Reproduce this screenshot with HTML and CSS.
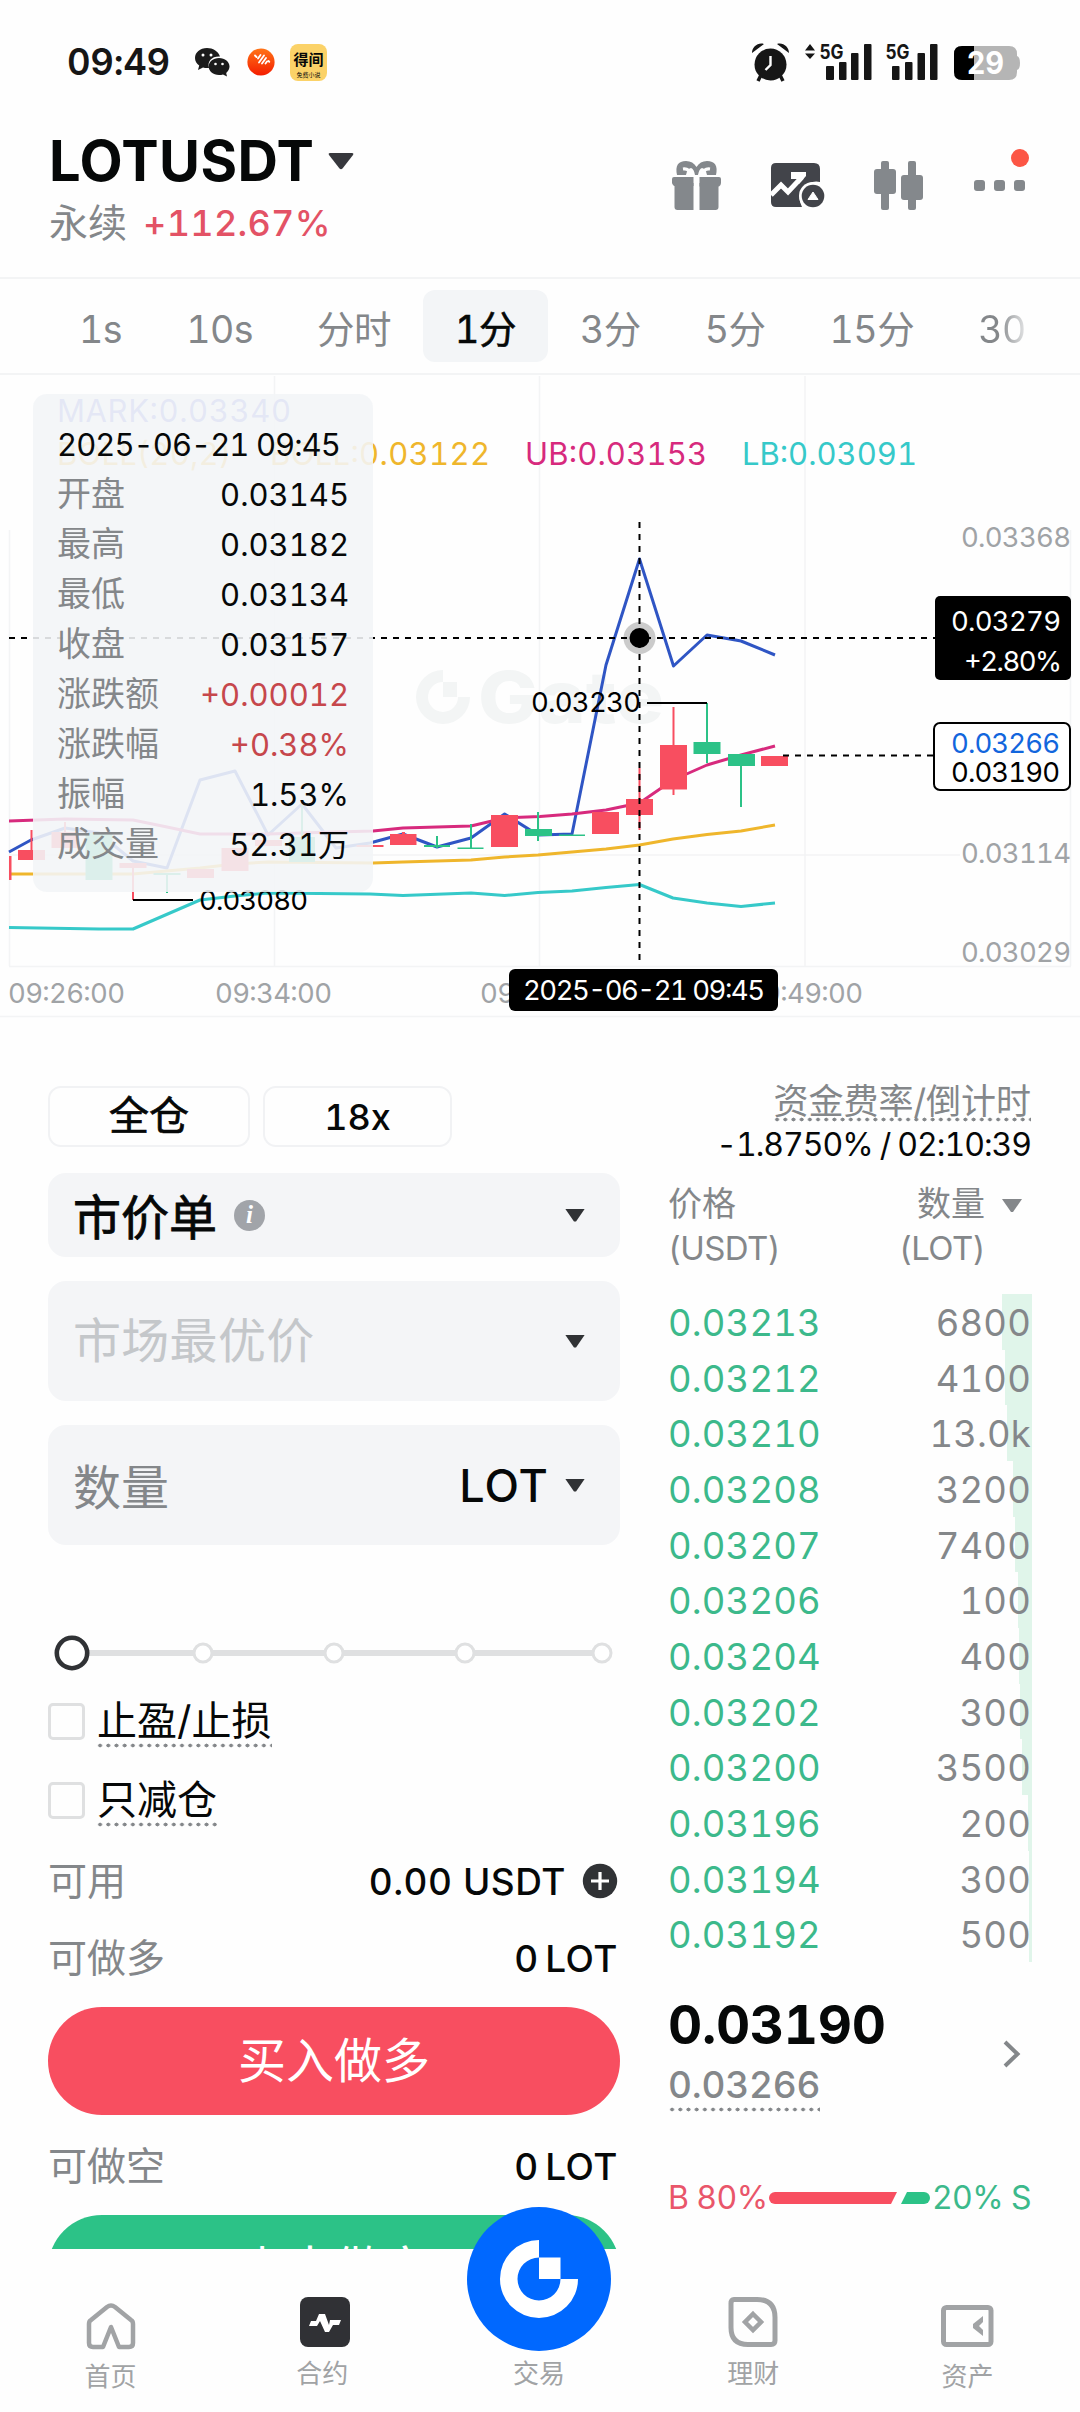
FILE: index.html
```html
<!DOCTYPE html>
<html lang="zh-CN">
<head>
<meta charset="utf-8">
<title>LOTUSDT 永续</title>
<link rel="stylesheet" href="styles.css">
</head>
<body>
<div class="page">
  <div class="status">
    <span class="clock">09:49</span>
    <svg class="wechat" width="36" height="30" viewBox="0 0 36 30"><path d="M13 1C6 1 1 5.500 1 11c0 3.200 1.600 5.800 4.200 7.600L4 23l5-2.500c2 .5 4 .7 6 .4 C13 14 18 9 26 9.500 24 4 19 1 13 1z" fill="#1b1b1b"/><path d="M25 11c-6 0-10.300 3.800-10.300 8.500S19 28 25 28c1.500 0 2.800-.2 4-.6l4 2-.8-3.400c2-1.700 3.300-4 3.300-6.500C35.500 14.800 31 11 25 11z" fill="#1b1b1b"/><g fill="#fff"><circle cx="9" cy="8" r="1.500"/><circle cx="17" cy="8" r="1.500"/><circle cx="21.500" cy="17" r="1.300"/><circle cx="28.500" cy="17" r="1.300"/></g></svg>
    <svg class="orb" width="28" height="28" viewBox="0 0 28 28"><defs><linearGradient id="og" x1="0" y1="0" x2="0" y2="1"><stop offset="0" stop-color="#ff7417"/><stop offset="1" stop-color="#f41d00"/></linearGradient></defs><circle cx="14" cy="14" r="13.600" fill="url(#og)"/><path d="M8 7.500l1.500 1.500M11 10.500l2.500-3.500M12 14.500l5-7M15 15.500l4-5.500M18.500 15.500l1.500-2M21.500 13l.8.8" stroke="#fff" stroke-width="1.800" stroke-linecap="round"/></svg>
    <div class="novel"><span class="novel-a">得间</span><span class="novel-b">免费小说</span></div>
    <svg class="sys" width="270" height="42" viewBox="750 41 270 42">
      <g fill="#161616"><circle cx="769.500" cy="64.500" r="16"/><path d="M757 81l3-6M782 81l-3-6" stroke="#161616" stroke-width="3.500"/><path d="M751 53c0-6 6-11 12-9zM788 53c0-6-6-11-12-9z"/><path d="M769.500 56v9l-5 5" stroke="#fff" stroke-width="2.400" fill="none"/>
      <path d="M804 50.500l5-6.500 5 6.500zM804 53.500l5 5.500 5-5.500z"/>
      <rect x="825" y="66" width="8" height="14" rx="1"/><rect x="838" y="62" width="7.500" height="18" rx="1"/><rect x="850" y="53" width="7.500" height="27" rx="1"/><rect x="863" y="44" width="7.500" height="36" rx="1"/>
      <rect x="891" y="66" width="7.500" height="14" rx="1"/><rect x="904" y="62" width="7.500" height="18" rx="1"/><rect x="916.500" y="53" width="7.500" height="27" rx="1"/><rect x="929" y="44" width="7.500" height="36" rx="1"/></g>
      <g class="g5"><text x="818.500" y="59" textLength="24" lengthAdjust="spacingAndGlyphs">5G</text><text x="884.500" y="59" textLength="24" lengthAdjust="spacingAndGlyphs">5G</text></g>
      <path d="M961 46h47q8 0 8 8v2q3 1 3 7t-3 7v2q0 8-8 8h-47q-8 0-8-8V54q0-8 8-8z" fill="#b5b5b5"/><path d="M973 46h-12q-8 0-8 8v18q0 8 8 8h12z" fill="#000"/>
      <text class="batt" x="966" y="74" textLength="37" lengthAdjust="spacingAndGlyphs">29</text>
    </svg>
  </div>

  <header class="head">
    <div class="pair">
      <div class="title">LOTUSDT <svg width="28" height="18" viewBox="0 0 28 18"><path d="M3 1h22q2 0 1 2L15.500 16.500q-1.500 1.500-3 0L2 3Q1 1 3 1z" fill="#37383d"/></svg></div>
      <div class="sub"><span>永续</span><b>+112.67%</b></div>
    </div>
    <svg class="tools" width="354" height="62" viewBox="672 151 354 62">
      <g fill="#84888c"><path d="M674 177h19.500v9H674q-2-2-2-3v-4q0-2 2-2zM699.500 177h19.500q2 0 2 2v4q0 2-2 3.500h-19.500z"/><path d="M674.500 183h19v27h-16q-3 0-3-3zM699.500 183h19v24q0 3-3 3h-16z"/><path d="M677 175q-3-14 9-14 7 0 10.500 6 3.500-6 10.500-6 12 0 9 14h-9q-1-6-5-7-3 1-4 7h-3q-1-6-4-7-4 1-5 7z"/></g>
      <path d="M683 169q6-1 8 6M710 169q-6-1-8 6" stroke="#fefefe" stroke-width="3" fill="none"/>
      <path d="M776 163h38q6 0 6 6v13a17 17 0 0 0-18 25H776q-5 0-5-5v-34q0-5 5-5z" fill="#42444a"/><path d="M771 195l10-10 7 7 14-15" stroke="#fff" stroke-width="5" fill="none"/><path d="M791 172h15v4l-7 8-2-5h-6z" fill="#fff"/>
      <circle cx="813" cy="196" r="14" fill="#fff"/><circle cx="813" cy="196" r="11.300" fill="#42444a"/><path d="M808 199.500l5-7.500 5 7.500z" fill="#fff" stroke="#fff" stroke-linejoin="round"/>
      <g fill="#84888c"><rect x="874" y="169" width="22" height="25" rx="3"/><rect x="881" y="161" width="8" height="49" rx="2"/><rect x="901" y="175" width="22" height="25" rx="3"/><rect x="908" y="161" width="8" height="49" rx="2"/><rect x="974" y="180" width="11" height="11" rx="3"/><rect x="994" y="180" width="11" height="11" rx="3"/><rect x="1014" y="180" width="11" height="11" rx="3"/></g>
    </svg>
    <i class="dot"></i>
  </header>

  <nav class="tabs"><span>1s</span><span>10s</span><span>分时</span><span class="on">1分</span><span>3分</span><span>5分</span><span>15分</span><span class="fade">30</span></nav>

  <section class="chart">
    <svg class="plot" width="1080" height="643" viewBox="0 375 1080 643">
      <g stroke="#f3f4f5" stroke-width="1.500" fill="none"><path d="M9.500 530V966M274.500 376V966M539.500 376V966M805 376V966M1070.500 530V966M9 855H960M9 966.500H1071M0 1016.500H1080"/></g>
      <g class="mark"><path d="M443 670a27 27 0 1 0 27 27h-12a15 15 0 1 1-15-15z"/><rect x="443" y="682" width="14" height="15"/><text x="478" y="723" textLength="186" lengthAdjust="spacingAndGlyphs">Gate</text></g>
      <g class="legend"><text x="57" y="422" textLength="234" fill="#6b78e0">MARK:0.03340</text><text x="57" y="465" textLength="174" fill="#efb62c">BOLL(20,2)</text><text x="270" y="465" textLength="220" fill="#efb62c">BOLL:0.03122</text><text x="525" y="465" textLength="182" fill="#d72a7d">UB:0.03153</text><text x="742" y="465" textLength="175" fill="#36c9c9">LB:0.03091</text></g>
      <g fill="none" stroke-width="3" stroke-linejoin="round">
        <path stroke="#2f55c4" d="M9 852L31 840 65 828 99 833 133 861 167 868 200 780 235 771 268 835 302 804 336 848 370 843 403 834 437 847 471 838 504.600 814 538 835 572 834 606 665 639.500 559 673.500 666 707 635 741 641 775 655"/>
        <path stroke="#d72a7d" d="M9 821L65 819 133 820 167 827 200 834 268 834 336 832 373 831 403 828 471 826 504.600 818 540 816.500 572 814 606 810 639.500 803 673 780 707 765 741 755 775 746"/>
        <path stroke="#efb62c" d="M9 874H133L200 868 235 864 268 862 373 863 403 862 471 860 504.600 857 538 855 572 852 606 849 639.500 845 673 839 707 834.500 741 831 775 825"/>
        <path stroke="#36c9c9" d="M9 927.500L99 929H133L200 900 235 896 268 893 370 894 403 895.500 471 893 504.600 895.500 538 892.500 572 891 606 887.500 639.500 884.500 673 898 707 903 741 906.500 775 903"/>
      </g>
      <g fill="#f84e60"><path d="M9 856h2.500v24H9zM18 850h27v10H18zM30.500 830h2v20h-2zM51.500 832h27v16h-27zM64 822h2v10h-2zM119.500 863h27v5h-27zM132 868h2v32h-2zM187 869h27v9h-27zM221.500 848h27v23h-27zM255 840h27v6h-27zM356.500 845h27v2h-27zM390 834h26.500v11H390zM402 832h3v2h-3zM491 815h27v32h-27zM592 812h27v22h-27zM626 799h27v16h-27zM638.500 768h2v62h-2zM660 745h27v44.500h-27zM672.500 707h2v88h-2zM761 756h27v10h-27z"/></g>
      <g fill="#2cc287"><path d="M85.500 833h27v47h-27zM153.500 873h27v2h-27zM166 875h2v18h-2zM289 837h26v25h-26zM301 805h2v32h-2zM424 845h26v2h-26zM436 836h2v12h-2zM457.500 847.500h26v1.500h-26zM470 824h2v24h-2zM525 829h27v7h-27zM537 812h2v29h-2zM559 834.500h26v1.500h-26zM693.500 742h27v12h-27zM706 703h2v60h-2zM728 754h27v12h-27zM740 766h2v41h-2z"/></g>
      <g class="small"><path d="M133 900h60M647 703h60" stroke="#000" stroke-width="2"/><text x="199" y="910" textLength="109">0.03080</text><text x="531" y="712" textLength="110">0.03230</text>
        <path d="M783 755.500H933M9 638H935M639.500 522V962" stroke="#000" stroke-width="2" stroke-dasharray="6 6"/></g>
      <circle cx="639.500" cy="638" r="16" fill="#000" opacity=".2"/><circle cx="639.500" cy="638" r="10"/>
      <g class="small axis"><text x="961" y="547" textLength="110">0.03368</text><text x="961" y="863" textLength="110">0.03114</text><text x="961" y="962" textLength="110">0.03029</text><text x="8" y="1003" textLength="117">09:26:00</text><text x="215" y="1003" textLength="117">09:34:00</text><text x="480" y="1003" textLength="117">09:42:00</text><text x="746" y="1003" textLength="117">09:49:00</text></g>
      <rect x="935" y="596" width="136" height="84" rx="5"/><rect x="509" y="969" width="269" height="42" rx="6"/>
      <rect x="934" y="723" width="136" height="67" rx="6" fill="#fff" stroke="#000" stroke-width="2"/>
      <g class="small"><text x="951" y="631" textLength="110" fill="#fff">0.03279</text><text x="964" y="671" textLength="98" fill="#fff">+2.80%</text><text x="523" y="1000" textLength="242" fill="#fff">2025-06-21 09:45</text><text x="951" y="753" textLength="109" fill="#1266dd">0.03266</text><text x="951" y="782" textLength="109">0.03190</text></g>
    </svg>
    <div class="tip">
      <div class="date">2025-06-21 09:45</div>
      <dl><dt>开盘</dt><dd>0.03145</dd><dt>最高</dt><dd>0.03182</dd><dt>最低</dt><dd>0.03134</dd><dt>收盘</dt><dd>0.03157</dd><dt>涨跌额</dt><dd class="up">+0.00012</dd><dt>涨跌幅</dt><dd class="up">+0.38%</dd><dt>振幅</dt><dd>1.53%</dd><dt>成交量</dt><dd>52.31万</dd></dl>
    </div>
  </section>

  <main class="trade">
    <section class="form">
      <div class="modes"><span class="mode wide">全仓</span><span class="mode">18x</span></div>
      <div class="field short"><span>市价单</span><i class="info">i</i><i class="caret"></i></div>
      <div class="field"><span class="hint">市场最优价</span><i class="caret"></i></div>
      <div class="field"><span class="label">数量</span><b class="unit">LOT</b><i class="caret"></i></div>
      <svg class="slider" width="572" height="40" viewBox="48 1633 572 40"><path d="M72 1653H602" stroke="#dfe0e1" stroke-width="6"/><g fill="#fff" stroke="#dfe0e1" stroke-width="3"><circle cx="203" cy="1653" r="9"/><circle cx="334" cy="1653" r="9"/><circle cx="465" cy="1653" r="9"/><circle cx="602" cy="1653" r="9"/></g><circle cx="72" cy="1653" r="15.200" fill="#fff" stroke="#303235" stroke-width="4.600"/></svg>
      <div class="check"><i></i><span>止盈/止损</span></div>
      <div class="check"><i></i><span>只减仓</span></div>
      <div class="row avail"><span>可用</span><b>0.00 USDT</b><svg width="36" height="36" viewBox="0 0 36 36"><circle cx="18" cy="18" r="17.200" fill="#303235"/><path d="M9 18h18M18 9v18" stroke="#fff" stroke-width="3.200"/></svg></div>
      <div class="row"><span>可做多</span><b class="lot">0 LOT</b></div>
      <div class="btn buy">买入做多</div>
      <div class="row second"><span>可做空</span><b class="lot">0 LOT</b></div>
      <div class="btn sell">卖出做空</div>
    </section>
    <section class="book">
      <div class="rate"><span>资金费率/倒计时</span></div>
      <div class="count">-1.8750%<i>/</i>02:10:39</div>
      <div class="cols"><div>价格<br><em>(USDT)</em></div><div class="r">数量<br><em>(LOT)</em></div><i class="caret gray"></i></div>
      <ul>
        <li><i style="width:30px"></i><b>0.03213</b><span>6800</span></li>
        <li><i style="width:27px"></i><b>0.03212</b><span>4100</span></li>
        <li><i style="width:25px"></i><b>0.03210</b><span>13.0k</span></li>
        <li><i style="width:19px"></i><b>0.03208</b><span>3200</span></li>
        <li><i style="width:17px"></i><b>0.03207</b><span>7400</span></li>
        <li><i style="width:14px"></i><b>0.03206</b><span>100</span></li>
        <li><i style="width:13px"></i><b>0.03204</b><span>400</span></li>
        <li><i style="width:12px"></i><b>0.03202</b><span>300</span></li>
        <li><i style="width:10px"></i><b>0.03200</b><span>3500</span></li>
        <li><i style="width:4px"></i><b>0.03196</b><span>200</span></li>
        <li><i style="width:3px"></i><b>0.03194</b><span>300</span></li>
        <li><i style="width:3px"></i><b>0.03192</b><span>500</span></li>
      </ul>
      <div class="last"><div><div class="price">0.03190</div><div class="index">0.03266</div></div><svg width="20" height="30" viewBox="0 0 20 30"><path d="M3 3l12.500 12L3 27" stroke="#84878a" stroke-width="4" fill="none"/></svg></div>
      <div class="ratio"><span class="b">B 80%</span><svg width="162" height="12" viewBox="0 0 162 12"><path d="M6 0h122l-6 12H6A6 6 0 0 1 6 0z" fill="#f84e60"/><path d="M138 0h17a6 6 0 0 1 0 12h-23z" fill="#2cc287"/></svg><span class="s">20% S</span></div>
    </section>
  </main>

  <footer class="bar">
    <div class="item low"><svg width="50" height="48" viewBox="87 2301 50 48"><path d="M92 2319l16-13q4-3 8 0l16 13q2 1 2 4v19q0 4-4 4h-10l-8-20-8 20H94q-4 0-4-4v-19q0-3 2-4z" fill="none" stroke="#a1a3a5" stroke-width="4.500" stroke-linejoin="round"/></svg><span>首页</span></div>
    <div class="item futures"><svg width="50" height="50" viewBox="300 2296 50 50"><rect x="300" y="2296" width="50" height="50" rx="8" fill="#303135"/><path d="M309 2325l2-5h5l3-7h6l4 11 1-5h11l-2 5h-6l-4 7h-4l-5-11-3 5z" fill="#fff"/></svg><span>合约</span></div>
    <div class="item mid"><svg class="fab" width="146" height="146" viewBox="466 2206 146 146"><circle cx="539" cy="2279" r="72" fill="#0068ff"/><path d="M539 2240a39 39 0 1 0 39 39h-17.500a21.500 21.500 0 1 1-21.500-21.500z" fill="#fff"/><rect x="539" y="2257.500" width="21.500" height="21.500" fill="#fff"/></svg><span>交易</span></div>
    <div class="item"><svg width="50" height="50" viewBox="728 2296 50 50"><path d="M734 2298.500h23q18 0 18 18v23q0 4-4 4h-23q-17 0-17-17v-24q0-4 3-4z" fill="none" stroke="#a1a3a5" stroke-width="5"/><path d="M753 2313l8 8-8 8-8-8z" fill="none" stroke="#a1a3a5" stroke-width="4.500"/></svg><span>理财</span></div>
    <div class="item low"><svg width="53" height="48" viewBox="941 2301 53 48"><rect x="943.500" y="2306.500" width="47.500" height="37" rx="3" fill="none" stroke="#a1a3a5" stroke-width="5"/><path d="M983 2315v6l-4 4 4 4v6l-10-8v-4z" fill="#a1a3a5"/></svg><span>资产</span></div>
  </footer>
</div>
</body>
</html>
```
FILE: styles.css
```css
* { box-sizing: border-box; margin: 0; padding: 0; }
body { background: #fff; color: #060808; font-family: Inter, "Noto Sans CJK SC", sans-serif; font-feature-settings: "tnum" 1; }
i, em { font-style: normal; }
.page { width: 1080px; height: 2412px; display: flex; flex-direction: column; overflow: hidden; background: #fefefe; }
svg { display: block; flex: none; }

.status { height: 124px; display: flex; align-items: center; padding-left: 67px; flex: none; }
.clock { font-size: 36.5px; font-weight: 600; width: 127px; color: #161616; letter-spacing: -.3px; }
.wechat { margin-right: 17px; }
.orb { margin-right: 15px; }
.novel { width: 37px; height: 37px; border-radius: 8px; background: #fbd268; display: flex; flex-direction: column; align-items: center; white-space: nowrap; }
.novel-a { font-size: 15px; line-height: 26px; font-weight: 600; padding-top: 3px; }
.novel-b { font-size: 6px; line-height: 4px; }
.sys { margin-left: 424px; }
.g5 { font: 700 20px Inter, sans-serif; fill: #161616; }
.batt { font: 700 31px Inter, sans-serif; fill: #fff; }

.head { height: 153px; display: flex; position: relative; padding-left: 49px; flex: none; }
.pair { width: 623px; }
.title { display: flex; align-items: center; gap: 13px; font-size: 56px; font-weight: 700; line-height: 74px; letter-spacing: .4px; }
.sub { display: flex; align-items: center; gap: 16px; line-height: 50px; font-size: 39px; color: #84878a; }
.sub b { color: #e35265; font-size: 36px; font-weight: 500; letter-spacing: .3px; }
.tools { margin-top: 27px; }
.dot { position: absolute; left: 1011px; top: 25px; width: 18px; height: 18px; border-radius: 50%; background: #fc5645; }

.tabs { height: 98px; flex: none; border-top: 2px solid #f3f4f5; border-bottom: 2px solid #f3f4f5; display: flex; align-items: center; padding: 0 47px; font-size: 37.5px; letter-spacing: -.5px; color: #84878a; overflow: hidden; }
.tabs span { padding: 8px 32px 0; line-height: 64px; height: 72px; white-space: nowrap; }
.tabs .on { background: #f3f5f7; color: #060808; border-radius: 12px; -webkit-text-stroke: .6px #060808; }
.tabs .fade { background: linear-gradient(90deg, #84878a 52px, #e4e5e6 80px); -webkit-background-clip: text; background-clip: text; color: transparent; }

.chart { position: relative; height: 643px; flex: none; }
.mark { fill: #f3f5f5; font: 800 72px Inter, sans-serif; }
.legend { font-size: 31px; }
.small { font-size: 27.5px; }
.axis { fill: #a0a3a6; }
.tip { position: absolute; left: 33px; top: 19px; width: 340px; height: 498px; padding: 26px 24px 0; border-radius: 14px; background: rgba(243, 245, 247, .89); font-size: 31px; line-height: 50px; }
.date { white-space: nowrap; letter-spacing: -.95px; }
.tip dl { display: grid; grid-template-columns: auto auto; }
.tip dt { color: #84878a; font-size: 34px; line-height: 48px; height: 50px; white-space: nowrap; }
.tip dd { text-align: right; white-space: nowrap; }
.tip .up { color: #c6474c; }

.trade { display: flex; height: 1231px; overflow: hidden; flex: none; padding-left: 48px; gap: 48px; }
.form { width: 572px; display: flex; flex-direction: column; padding-top: 68px; }
.modes { display: flex; gap: 13px; height: 61px; flex: none; margin-bottom: 26px; }
.mode { width: 189px; border: 2px solid #f1f2f4; border-radius: 13px; font-size: 36px; font-weight: 500; line-height: 58px; text-align: center; }
.mode.wide { width: 202px; font-size: 40px; font-weight: 400; line-height: 56px; -webkit-text-stroke: .7px #060808; }
.field { height: 120px; flex: none; margin-bottom: 24px; background: #f4f5f7; border-radius: 18px; display: flex; align-items: center; padding: 0 35px 0 25px; font-size: 48px; }
.field span { padding-bottom: 3px; }
.short { height: 84px; }
.short span { -webkit-text-stroke: .8px #060808; }
.field .hint { color: #c4c7ca; padding-bottom: 8px; letter-spacing: .3px; }
.label { color: #84878a; }
.info { width: 31px; height: 31px; margin-left: 17px; border-radius: 50%; background: #a1a4a9; color: #fff; font: italic 700 25px/30px "Liberation Serif", serif; text-align: center; }
.caret { width: 20px; height: 13px; margin-left: auto; background: #303235; clip-path: polygon(0 0, 100% 0, 55% 100%, 45% 100%); }
.unit { font-size: 45px; font-weight: 500; letter-spacing: 1px; margin-left: auto; margin-right: 16px; }
.unit + .caret { margin-left: 0; }
.slider { margin: 64px 0 24px; }
.check { height: 79px; flex: none; display: flex; align-items: flex-start; gap: 11px; padding-top: 6px; font-size: 40px; line-height: 36px; }
.check i { width: 37px; height: 37px; border: 3px solid #dfe0e1; border-radius: 5px; }
.check span, .rate span, .index { background: radial-gradient(circle, #84878a 1.700px, transparent 2.200px) 0 100% / 8.200px 5px repeat-x; }
.check span { height: 45px; padding: 0 1px; }
.row { display: flex; align-items: center; justify-content: space-between; height: 52px; flex: none; font-size: 39px; padding: 0 2px 0 0; }
.row span { color: #84878a; padding-bottom: 7px; }
.row b { font-size: 37px; font-weight: 500; letter-spacing: .5px; }
.avail { margin: 0 0 25px; }
.avail b { margin-left: auto; margin-right: 16px; }
.lot { word-spacing: -4px; }
.btn { height: 108px; flex: none; border-radius: 54px; color: #fff; font-size: 48px; line-height: 107px; text-align: center; }
.buy { background: #f84e60; margin-top: 23px; }
.sell { background: #2cc287; }
.second { margin: 25px 0 23px; }

.book { width: 363px; padding-top: 63px; }
.rate { text-align: right; color: #84878a; font-size: 35px; line-height: 40px; height: 41px; }
.rate span { display: inline-block; height: 41px; white-space: nowrap; }
.count { font-size: 32px; line-height: 46px; height: 44px; text-align: right; white-space: nowrap; letter-spacing: -1px; }
.count i { margin: 0 7px; }
.cols { display: flex; color: #84878a; font-size: 34px; line-height: 44px; padding-top: 16px; height: 128px; }
.cols em { font-size: 33px; letter-spacing: -.6px; }
.cols .r { margin-left: auto; margin-right: 17px; text-align: right; }
.caret.gray { background: #84878a; margin: 17px 9px 0 0; }
.book ul { list-style: none; }
.book li { height: 55.66px; line-height: 58px; display: flex; justify-content: space-between; position: relative; font-size: 36.5px; letter-spacing: .15px; color: #84878a; }
.book li b { font-weight: 400; color: #3cb98b; position: relative; }
.book li span { position: relative; }
.book li i { position: absolute; right: -1px; top: 0; bottom: 0; background: #e0f5ea; }
.last { display: flex; justify-content: space-between; align-items: center; height: 150px; padding: 34px 9px 0 0; }
.price { font-size: 53px; font-weight: 700; line-height: 60px; letter-spacing: -.3px; }
.index { display: inline-block; font-size: 37px; font-weight: 500; line-height: 60px; height: 57px; color: #84878a; letter-spacing: -.2px; }
.ratio { display: flex; align-items: center; justify-content: space-between; font-size: 32px; letter-spacing: -.6px; line-height: 40px; margin-top: 66px; white-space: nowrap; }
.ratio .b { color: #e9566a; }
.ratio .s { color: #3cb98b; }

.bar { height: 164px; flex: none; position: relative; display: flex; justify-content: space-between; padding: 48px 86px 0 84px; color: #a1a3a5; font-size: 26px; line-height: 34px; }
.item { display: flex; flex-direction: column; align-items: center; gap: 10px; width: 53px; white-space: nowrap; }
.futures span { margin-left: -5px; }
.low { padding-top: 5px; }
.mid { padding-top: 60px; }
.fab { position: absolute; left: 466px; top: -43px; }
```
